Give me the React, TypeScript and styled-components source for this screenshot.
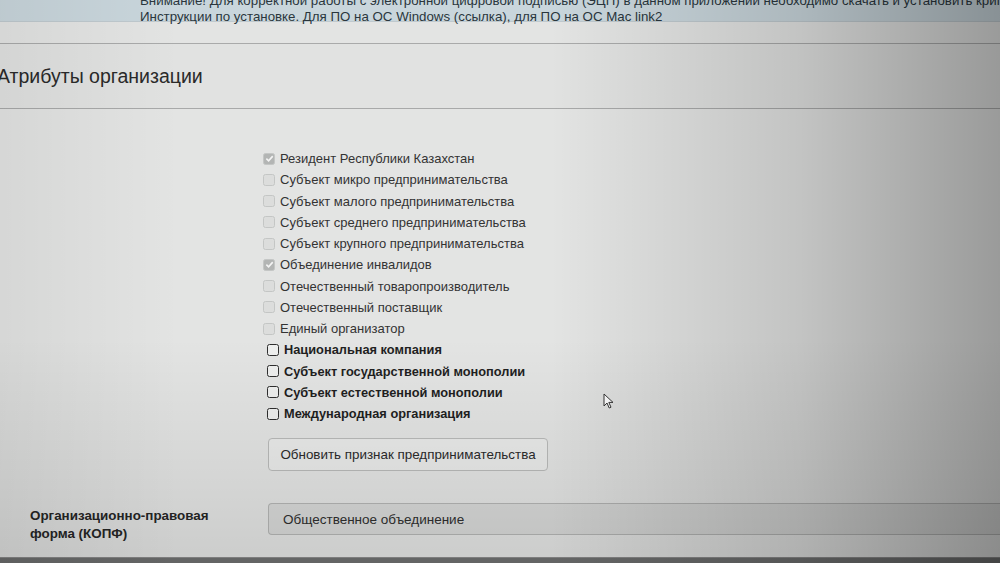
import React from "react";
import styled, { createGlobalStyle } from "styled-components";

const GlobalStyle = createGlobalStyle`
  html, body {
    margin: 0;
    padding: 0;
    background: #dcdddc;
    overflow: hidden;
  }
  body {
    font-family: "Liberation Sans", Arial, sans-serif;
    color: #2b2b2b;
  }
`;

const Page = styled.div`
  position: relative;
  width: 1000px;
  height: 563px;
  overflow: hidden;
  background: #e3e4e3;
  display: flex;
  flex-direction: column;
`;

const Alert = styled.div`
  background: #c9d6dc;
  color: #2a363d;
  font-size: 13.3px;
  line-height: 16px;
  height: 28px;
  margin-top: -10px;
  padding: 3px 0 0 140px;
  white-space: nowrap;
  border-bottom: 1px solid #bfc9ce;
  flex-shrink: 0;
`;

const AlertLine = styled.div`
  height: 16px;
`;

const Panel = styled.section`
  margin: 21px 0 0 -8px;
  display: flex;
  flex-direction: column;
  flex: 1;
  border-top: 1px solid #a9aaaa;
`;

const PanelHeading = styled.header`
  height: 64px;
  display: flex;
  align-items: center;
  padding-left: 5px;
  background: #e1e2e1;
  border-bottom: 1px solid #a8a9a9;
  font-size: 19.5px;
  color: #2a2a2a;
`;

const PanelBody = styled.div`
  flex: 1;
  padding-top: 39px;
  display: flex;
  flex-direction: column;
  border-bottom: 1px solid #8c8c8c;
`;

const FormRow = styled.div<{ $gap?: number }>`
  display: grid;
  grid-template-columns: 276px 1fr;
  margin-bottom: ${(p) => p.$gap ?? 0}px;
`;

const RowLabel = styled.div`
  padding: 4px 0 0 38px;
  font-size: 13.4px;
  line-height: 18px;
  font-weight: bold;
  color: #262626;
`;

const CheckList = styled.div`
  display: flex;
  flex-direction: column;
  margin-left: -5px;
`;

const CheckRow = styled.label<{ $bold?: boolean }>`
  height: 21.25px;
  display: flex;
  align-items: center;
  gap: 5px;
  font-size: ${(p) => (p.$bold ? "12.8px" : "13px")};
  font-weight: ${(p) => (p.$bold ? "bold" : "normal")};
  color: ${(p) => (p.$bold ? "#1f1f1f" : "#333")};
  white-space: nowrap;
  padding-left: ${(p) => (p.$bold ? "4px" : "0")};
`;

const Box = styled.span<{ $checked?: boolean; $disabled?: boolean }>`
  width: 12px;
  height: 12px;
  box-sizing: border-box;
  border-radius: 2.5px;
  display: inline-flex;
  align-items: center;
  justify-content: center;
  flex-shrink: 0;
  border: ${(p) => (p.$disabled ? "1px solid #c4c6c5" : "1.5px solid #2e2e2e")};
  background: ${(p) =>
    p.$checked ? "#b3b5b4" : p.$disabled ? "#dcdddc" : "#eeefee"};
`;

const UpdateButton = styled.button`
  margin-top: 14px;
  width: 280px;
  height: 33px;
  box-sizing: border-box;
  border: 1px solid #b9bab9;
  border-radius: 4px;
  background: #e9eae9;
  font-family: "Liberation Sans", Arial, sans-serif;
  font-size: 13.4px;
  color: #2b2b2b;
  padding: 0;
`;

const ReadonlyInput = styled.div`
  height: 32px;
  box-sizing: border-box;
  border: 1px solid #b4b5b4;
  border-right: none;
  border-radius: 4px 0 0 4px;
  background: #d7d8d7;
  display: flex;
  align-items: center;
  padding: 0 14px;
  font-size: 13.5px;
  color: #2f2f2f;
`;

const BottomEdge = styled.div`
  height: 5px;
  background: #6f7070;
  flex-shrink: 0;
`;

const Shade = styled.div`
  position: absolute;
  inset: 0;
  pointer-events: none;
  background:
    linear-gradient(to right, rgba(0, 0, 0, 0.06) 0%, rgba(0, 0, 0, 0) 18%, rgba(0, 0, 0, 0) 55%, rgba(0, 0, 0, 0.14) 80%, rgba(0, 0, 0, 0.32) 100%),
    linear-gradient(to bottom, rgba(0, 0, 0, 0) 60%, rgba(0, 0, 0, 0.1) 100%);
`;

const Cursor = styled.svg`
  position: absolute;
  left: 603px;
  top: 393px;
`;

type Attr = { label: string; checked?: boolean; disabled?: boolean };

const attributes: Attr[] = [
  { label: "Резидент Республики Казахстан", checked: true, disabled: true },
  { label: "Субъект микро предпринимательства", disabled: true },
  { label: "Субъект малого предпринимательства", disabled: true },
  { label: "Субъект среднего предпринимательства", disabled: true },
  { label: "Субъект крупного предпринимательства", disabled: true },
  { label: "Объединение инвалидов", checked: true, disabled: true },
  { label: "Отечественный товаропроизводитель", disabled: true },
  { label: "Отечественный поставщик", disabled: true },
  { label: "Единый организатор", disabled: true },
  { label: "Национальная компания" },
  { label: "Субъект государственной монополии" },
  { label: "Субъект естественной монополии" },
  { label: "Международная организация" },
];

const Checkbox: React.FC<Attr> = ({ checked, disabled }) => (
  <Box $checked={checked} $disabled={disabled}>
    {checked && (
      <svg width="9" height="9" viewBox="0 0 10 10">
        <path d="M1.5 5.2 L4 7.6 L8.6 2.4" fill="none" stroke="#f4f4f4" strokeWidth="1.8" />
      </svg>
    )}
  </Box>
);

export default function App() {
  return (
    <>
      <GlobalStyle />
      <Page>
        <Alert>
          <AlertLine>
            Внимание! Для корректной работы с электронной цифровой подписью (ЭЦП) в данном приложении необходимо скачать и установить криптосокет Tumar CSP.
          </AlertLine>
          <AlertLine>
            Инструкции по установке. Для ПО на ОС Windows (ссылка), для ПО на ОС Mac link2
          </AlertLine>
        </Alert>
        <Panel>
          <PanelHeading>Атрибуты организации</PanelHeading>
          <PanelBody>
            <FormRow $gap={32}>
              <div />
              <div>
                <CheckList>
                  {attributes.map((a) => (
                    <CheckRow key={a.label} $bold={!a.disabled}>
                      <Checkbox {...a} />
                      {a.label}
                    </CheckRow>
                  ))}
                </CheckList>
                <UpdateButton>Обновить признак предпринимательства</UpdateButton>
              </div>
            </FormRow>
            <FormRow>
              <RowLabel>
                Организационно-правовая
                <br />
                форма (КОПФ)
              </RowLabel>
              <ReadonlyInput>Общественное объединение</ReadonlyInput>
            </FormRow>
          </PanelBody>
          <BottomEdge />
        </Panel>
        <Shade />
        <Cursor width="11" height="16" viewBox="0 0 11 16">
          <path d="M1 1 L1 13 L4 10 L6.2 15 L8 14.2 L5.8 9.4 L10 9.4 Z" fill="#f2f2f2" stroke="#333" strokeWidth="1" />
        </Cursor>
      </Page>
    </>
  );
}
